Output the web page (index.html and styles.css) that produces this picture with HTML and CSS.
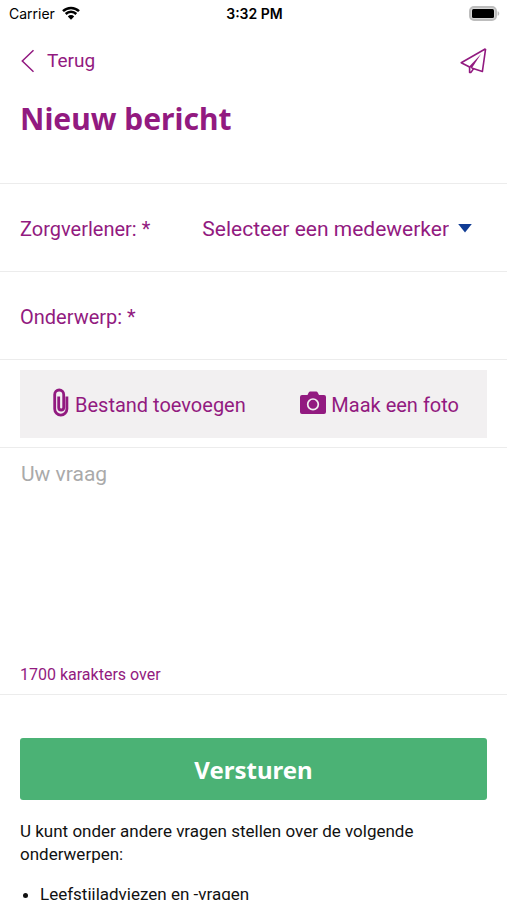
FILE: index.html
```
<!DOCTYPE html>
<html lang="nl">
<head>
<meta charset="utf-8">
<meta name="viewport" content="width=device-width, initial-scale=1">
<title>Nieuw bericht</title>
<link rel="stylesheet" href="styles.css">
</head>
<body>
<div class="app">
  <div class="status">
    <div class="status-carrier">
      <span>Carrier</span>
      <svg class="wifi" viewBox="0 0 18 14" width="18" height="14" aria-hidden="true">
        <path d="M1 5.2a11.4 11.4 0 0 1 16 0M3.7 8a7.5 7.5 0 0 1 10.6 0" fill="none" stroke="#000" stroke-width="2.5"/>
        <path d="M5.8 10.4a4.6 4.6 0 0 1 6.4 0L9 13.7z"/>
      </svg>
    </div>
    <time class="status-time">3:32 PM</time>
    <svg class="battery" viewBox="0 0 31 15" width="31" height="15" aria-hidden="true">
      <rect x="1" y="1" width="26" height="13" rx="4" fill="#d8d8d8" stroke="#bdbdbd" stroke-width="2"/>
      <rect x="3" y="3" width="22" height="9" rx="1.5"/>
      <path d="M28.6 5.2c2.200.6 2.200 4 0 4.600z" fill="#bdbdbd"/>
    </svg>
  </div>

  <header class="header">
    <nav class="nav">
      <a class="back" href="#">
        <svg viewBox="0 0 14 24" width="14" height="24" aria-hidden="true"><path d="M12.5 1.2 1.3 12l11.2 10.8" fill="none" stroke="currentColor" stroke-width="1.5"/></svg>
        <span>Terug</span>
      </a>
      <button class="send" type="submit" form="message" aria-label="Verzenden">
        <svg viewBox="0 0 28 28" width="28" height="28" aria-hidden="true">
          <path d="M26.6 1.800 2.200 15.700l8.400 4.300M12.600 21l10.800 3.400 3.200-22.600" fill="none" stroke="currentColor" stroke-width="1.600" stroke-linejoin="round"/>
          <path d="M10 19.800 22 7 12.800 21.200z" fill="currentColor"/>
          <path d="M10.600 19.800v5.600h1.400l2.800-4" fill="none" stroke="currentColor" stroke-width="1.600" stroke-linejoin="round"/>
        </svg>
      </button>
    </nav>
    <h1>Nieuw bericht</h1>
  </header>

  <form class="form" id="message">
    <div class="row">
      <label for="caregiver">Zorgverlener: *</label>
      <div class="picker">
        <select id="caregiver"><option>Selecteer een medewerker</option></select>
        <svg class="caret" viewBox="0 0 14 9" width="14" height="9" aria-hidden="true"><path d="M.2 0h13.600L7 8.500z"/></svg>
      </div>
    </div>
    <div class="row">
      <label for="subject">Onderwerp: *</label>
      <input id="subject" type="text">
    </div>
    <div class="attach">
      <div class="attach-bar">
        <button type="button">
          <svg viewBox="0 0 18 30" width="18" height="30" aria-hidden="true"><path d="M14.900 9.500v12.500a6.100 6.100 0 0 1-12.200 0V7.500a4.500 4.500 0 0 1 9 0v13a2.500 2.500 0 0 1-5 0V9.500" fill="none" stroke="currentColor" stroke-width="2.800"/></svg>
          <span>Bestand toevoegen</span>
        </button>
        <button type="button">
          <svg viewBox="0 0 26 30" width="26" height="30" aria-hidden="true">
            <path d="M2 8h5.500l1.200-2.600q.5-1 1.500-1h6q1 0 1.500 1L19 8h5q2 0 2 2v15q0 2-2 2H2q-2 0-2-2V10q0-2 2-2z" fill="currentColor"/>
            <circle cx="13" cy="17.300" r="5.300" fill="none" stroke="#f2f0f1" stroke-width="1.700"/>
          </svg>
          <span>Maak een foto</span>
        </button>
      </div>
    </div>
    <div class="question">
      <textarea id="question" aria-label="Uw vraag" aria-describedby="left" placeholder="Uw vraag"></textarea>
      <p id="left" class="counter">1700 karakters over</p>
    </div>
    <div class="submit"><button type="submit">Versturen</button></div>
  </form>

  <section class="info">
    <p>U kunt onder andere vragen stellen over de volgende onderwerpen:</p>
    <ul>
      <li>Leefstijladviezen en -vragen</li>
    </ul>
  </section>
</div>
</body>
</html>
```
FILE: styles.css
```
:root {
  --purple: #921a80;
  --line: #ececec;
  --gutter: 20px;
}

* {
  box-sizing: border-box;
}

body {
  margin: 0;
  background: #fff;
  color: #111;
  font-family: Roboto, "Liberation Sans", sans-serif;
}

.app {
  height: 100vh;
  overflow-y: auto;
  scrollbar-width: none;
}

button,
select,
input,
textarea {
  margin: 0;
  padding: 0;
  border: 0;
  background: none;
  color: inherit;
  font: inherit;
}

button {
  cursor: pointer;
}

svg {
  display: block;
  flex: none;
}

.status {
  display: grid;
  grid-template-columns: 1fr auto 1fr;
  align-items: center;
  height: 26px;
  padding: 0 7px 0 9px;
  color: #000;
  font-family: Inter, "Liberation Sans", sans-serif;
  font-size: 14px;
}

.status-carrier {
  display: flex;
  align-items: center;
  gap: 7px;
}

.status-time {
  font-weight: 600;
}

.battery {
  justify-self: end;
}

.header {
  height: 158px;
  padding: 21px var(--gutter) 0;
  border-bottom: 1px solid var(--line);
  color: var(--purple);
}

.nav {
  display: flex;
  align-items: center;
  justify-content: space-between;
}

.back {
  display: flex;
  align-items: center;
  gap: 12px;
  padding-left: 1px;
  color: inherit;
  font-size: 19px;
  line-height: 28px;
  text-decoration: none;
}

h1 {
  margin: 26px 0 0;
  font-family: "Noto Sans", sans-serif;
  font-size: 30px;
  font-weight: 700;
  line-height: 36px;
}

.form {
  color: var(--purple);
}

.row {
  display: flex;
  align-items: center;
  gap: 16px;
  height: 88px;
  padding: 2px var(--gutter) 0;
  border-bottom: 1px solid var(--line);
  font-size: 20px;
}

.row input {
  flex: 1;
  min-width: 0;
  height: 48px;
  outline: 0;
}

.picker {
  display: flex;
  flex: 1;
  align-items: center;
  min-width: 0;
  padding-right: 15px;
  font-size: 21px;
}

.picker select {
  flex: 1;
  min-width: 0;
  height: 48px;
  padding-right: 23px;
  margin-right: -14px;
  appearance: none;
  text-align-last: right;
}

.caret {
  fill: #103c94;
  pointer-events: none;
}

.attach {
  padding: 10px var(--gutter) 9px;
  border-bottom: 1px solid var(--line);
}

.attach-bar {
  display: flex;
  align-items: center;
  justify-content: space-between;
  height: 68px;
  padding: 2px 28px 0 32px;
  background: #f2f0f1;
  font-size: 20px;
}

.attach-bar button {
  display: flex;
  align-items: center;
  gap: 5px;
}

.attach-bar svg {
  margin-bottom: 6px;
}

.question {
  padding: 12px var(--gutter) 8px;
  border-bottom: 1px solid var(--line);
}

.question textarea {
  display: block;
  width: 100%;
  height: 204px;
  padding-left: 1px;
  font-size: 21px;
  line-height: 28px;
  outline: 0;
  resize: none;
}

.question textarea::placeholder {
  color: #aaa;
}

.counter {
  margin: 0;
  font-size: 16px;
  line-height: 22px;
}

.submit {
  padding: 43px var(--gutter) 0;
}

.submit button {
  width: 100%;
  height: 62px;
  border-radius: 3px;
  background: #4bb275;
  color: #fff;
  font-family: "Noto Sans", sans-serif;
  font-size: 24px;
  font-weight: 700;
}

.info {
  padding: 20px var(--gutter);
  font-size: 17px;
  line-height: 23px;
}

.info p {
  margin: 0 0 17px;
}

.info ul {
  margin: 0;
  padding-left: 20px;
}
```
